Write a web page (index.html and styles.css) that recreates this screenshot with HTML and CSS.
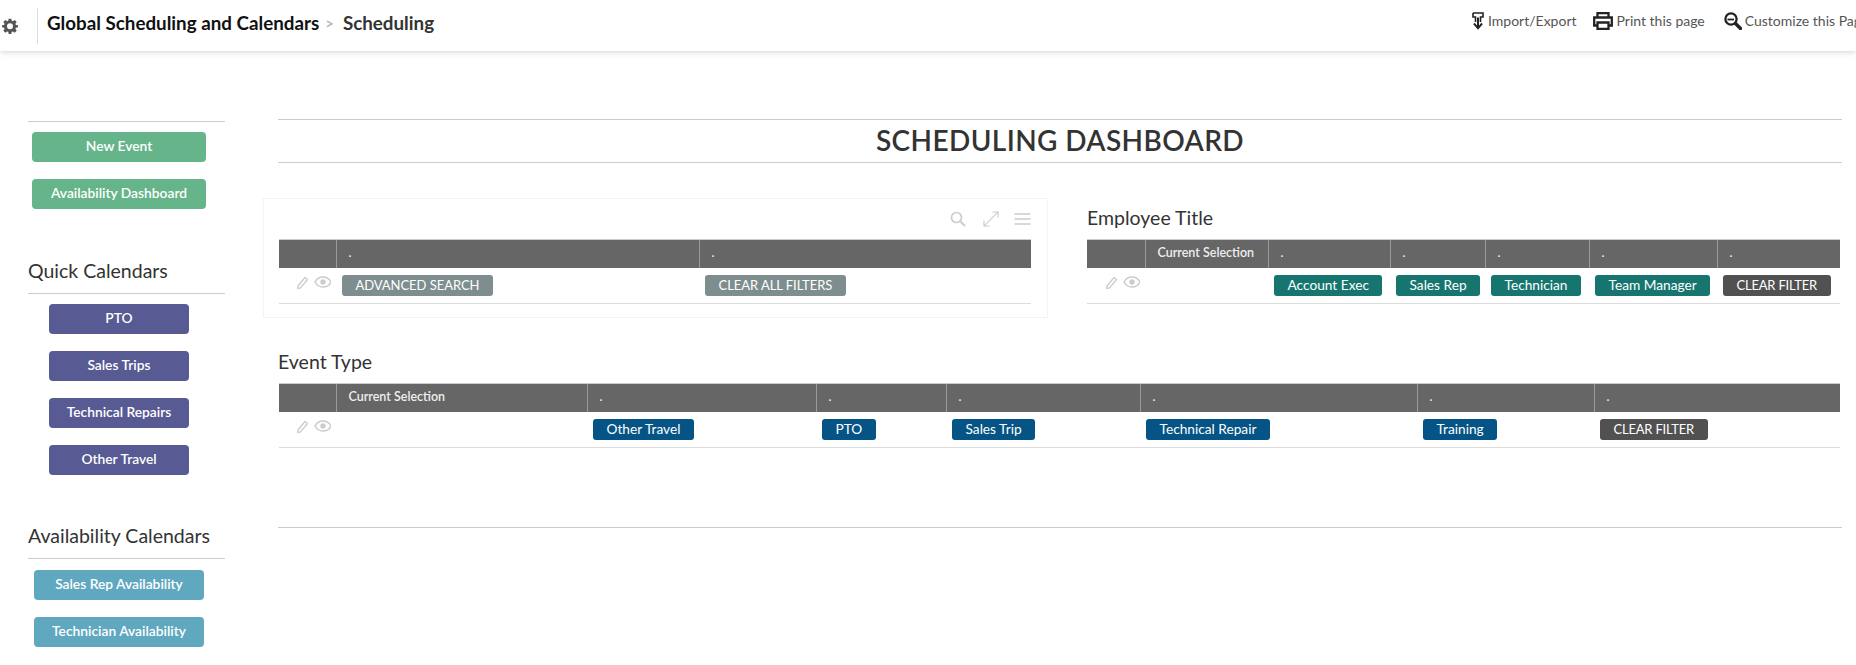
FILE: index.html
```html
<!DOCTYPE html>
<html lang="en">
<head>
<meta charset="utf-8">
<title>Scheduling</title>
<link rel="stylesheet" href="styles.css">
</head>
<body>
<header class="topbar">
  <div class="crumbs">
    <svg class="gear" viewBox="0 0 24 24"><path fill-rule="evenodd" d="M10 1h4l.6 3.200 1.700.7L19 3l3 3-1.900 2.700.7 1.700L24 11v3l-3.200.6-.7 1.700L22 19l-3 3-2.700-1.900-1.700.7L14 24h-4l-.6-3.200-1.700-.7L5 22l-3-3 1.900-2.700-.7-1.700L0 14v-3l3.200-.6.7-1.700L2 6l3-3 2.700 1.900 1.700-.7zM12 8a4.500 4.500 0 1 0 0 9 4.500 4.500 0 0 0 0-9z"/></svg>
    <span class="divider"></span>
    <span class="crumb-main">Global Scheduling and Calendars</span>
    <span class="crumb-sep">&gt;</span>
    <span class="crumb-sub">Scheduling</span>
  </div>
  <nav class="actions">
    <a class="action action-import">
      <svg class="ico-import" viewBox="0 0 12 18"><path d="M1 1h10v4H8.500v5M1 1v4h2.500v5" fill="none" stroke="#222" stroke-width="1.600"/><path d="M6 5.500V16M2 11.500 6 16.300l4-4.800" fill="none" stroke="#222" stroke-width="2"/></svg>
      Import/Export</a>
    <a class="action action-print">
      <svg class="ico-print" viewBox="0 0 20 18"><path d="M4.500 5V1.200h11V5M4.500 13.500H1.200V5.500h17.600v8h-3.300M4.500 10.500h11v6.300h-11z" fill="none" stroke="#222" stroke-width="2.300"/></svg>
      Print this page</a>
    <a class="action action-custom">
      <svg class="ico-custom" viewBox="0 0 18 18"><circle cx="7" cy="7" r="5.600" fill="none" stroke="#222" stroke-width="2.300"/><path d="M11.500 11.500l5 5" stroke="#222" stroke-width="3.400" stroke-linecap="round"/><path d="M3.500 7.500h6.500" stroke="#222" stroke-width="1.800"/></svg>
      Customize this Page</a>
  </nav>
</header>

<div class="page">
  <aside class="sidebar">
    <section class="side-first">
      <div class="side-buttons">
        <a class="side-btn green w174">New Event</a>
        <a class="side-btn green w174">Availability Dashboard</a>
      </div>
    </section>
    <section class="side-quick">
      <h3 class="side-title">Quick Calendars</h3>
      <div class="side-buttons">
        <a class="side-btn purple w140">PTO</a>
        <a class="side-btn purple w140">Sales Trips</a>
        <a class="side-btn purple w140">Technical Repairs</a>
        <a class="side-btn purple w140">Other Travel</a>
      </div>
    </section>
    <section class="side-avail">
      <h3 class="side-title">Availability Calendars</h3>
      <div class="side-buttons">
        <a class="side-btn blue w170">Sales Rep Availability</a>
        <a class="side-btn blue w170">Technician Availability</a>
      </div>
    </section>
  </aside>

  <main class="content">
    <h1 class="dash-title">SCHEDULING DASHBOARD</h1>

    <div class="top-row">
      <section class="card">
        <div class="tools">
          <svg class="tool t-search" viewBox="0 0 16 16"><circle cx="6.500" cy="6.500" r="5" fill="none" stroke="#ccc" stroke-width="1.700"/><path d="M10.500 10.500 15 15" stroke="#ccc" stroke-width="2"/></svg>
          <svg class="tool t-expand" viewBox="0 0 17 17"><path d="M1 16 16 1M10 1h6v6M1 10v6h6" fill="none" stroke="#ccc" stroke-width="1.200"/></svg>
          <svg class="tool t-menu" viewBox="0 0 16 12"><path d="M0 1h16M0 6h16M0 11h16" stroke="#ccc" stroke-width="1.300"/></svg>
        </div>
        <table class="grid">
          <colgroup><col class="c57"><col class="c363"><col></colgroup>
          <thead><tr><th></th><th>.</th><th>.</th></tr></thead>
          <tbody><tr>
            <td class="row-icons"><svg class="row-svg" viewBox="0 0 34 14"><use href="#rowicons"/></svg></td>
            <td><a class="pill grey">ADVANCED SEARCH</a></td>
            <td><a class="pill grey">CLEAR ALL FILTERS</a></td>
          </tr></tbody>
        </table>
      </section>

      <section class="panel">
        <h3 class="panel-title">Employee Title</h3>
        <table class="grid">
          <colgroup><col class="c58"><col class="c123"><col class="c122"><col class="c95"><col class="c104"><col class="c128"><col></colgroup>
          <thead><tr><th></th><th>Current Selection</th><th>.</th><th>.</th><th>.</th><th>.</th><th>.</th></tr></thead>
          <tbody><tr>
            <td class="row-icons"><svg class="row-svg" viewBox="0 0 34 14"><use href="#rowicons"/></svg></td>
            <td></td>
            <td><a class="pill teal">Account Exec</a></td>
            <td><a class="pill teal">Sales Rep</a></td>
            <td><a class="pill teal">Technician</a></td>
            <td><a class="pill teal">Team Manager</a></td>
            <td><a class="pill dark">CLEAR FILTER</a></td>
          </tr></tbody>
        </table>
      </section>
    </div>

    <section class="event">
      <h3 class="panel-title">Event Type</h3>
      <table class="grid">
        <colgroup><col class="c57"><col class="c251"><col class="c229"><col class="c130"><col class="c194"><col class="c277"><col class="c177"><col></colgroup>
        <thead><tr><th></th><th>Current Selection</th><th>.</th><th>.</th><th>.</th><th>.</th><th>.</th><th>.</th></tr></thead>
        <tbody><tr>
          <td class="row-icons"><svg class="row-svg" viewBox="0 0 34 14"><use href="#rowicons"/></svg></td>
          <td></td>
          <td><a class="pill navy">Other Travel</a></td>
          <td><a class="pill navy">PTO</a></td>
          <td><a class="pill navy">Sales Trip</a></td>
          <td><a class="pill navy">Technical Repair</a></td>
          <td><a class="pill navy">Training</a></td>
          <td><a class="pill dark">CLEAR FILTER</a></td>
        </tr></tbody>
      </table>
    </section>
    <div class="end-rule"></div>
  </main>
</div>

<svg class="defs" width="0" height="0">
  <symbol id="rowicons" viewBox="0 0 34 14">
    <path d="M1 11 8 2.500l2.500 2L3.500 13l-3 .5z" fill="none" stroke="#ccc" stroke-width="1.300"/>
    <path d="M18 7c1.800-3.300 4.300-5 8-5s6.200 1.700 8 5c-1.800 3.300-4.300 5-8 5s-6.200-1.700-8-5z" fill="none" stroke="#ccc" stroke-width="1.500"/>
    <circle cx="26" cy="7" r="2.700" fill="#ccc"/>
  </symbol>
</svg>
</body>
</html>
```
FILE: styles.css
```css
* { box-sizing: border-box; }
html, body { margin: 0; padding: 0; }
body {
  width: 1856px;
  height: 665px;
  overflow: hidden;
  background: #fff;
  font-family: Lato, "Open Sans", sans-serif;
  color: #333;
}
.defs { position: absolute; }

.topbar {
  display: flex;
  align-items: center;
  height: 51px;
  background: #fff;
  box-shadow: 0 1px 6px rgba(0,0,0,.18);
  overflow: hidden;
}
.crumbs {
  flex: 0 0 1472px;
  display: flex;
  align-items: center;
  padding-left: 2px;
}
.gear { width: 16px; height: 16px; fill: #555; }
.divider { width: 1px; height: 36px; background: #ddd; margin: 0 9px 0 19px; }
.crumb-main { font-size: 18.8px; font-weight: 700; color: #111; margin-top: -6px; }
.crumb-sep { font-size: 15px; font-weight: 700; color: #bbb; margin: -6px 9px 0 6px; }
.crumb-sub { font-size: 18.8px; font-weight: 700; color: #333; margin-top: -6px; }

.actions { flex: none; display: flex; align-items: center; margin-top: -10px; }
.action { display: flex; align-items: center; font-size: 14px; color: #555; white-space: nowrap; }
.action-print { margin-left: 16px; }
.action-custom { margin-left: 19px; }
.ico-import { width: 12px; height: 18px; margin-right: 4px; }
.ico-print { width: 20px; height: 18px; margin-right: 4px; }
.ico-custom { width: 18px; height: 18px; margin-right: 3px; }

.page { display: flex; }
.sidebar { flex: 0 0 197px; margin-left: 28px; padding-top: 70px; }
.side-first { border-top: 1px solid #ccc; padding-top: 10px; }
.side-quick { margin-top: 43px; }
.side-avail { margin-top: 42px; }
.side-title {
  margin: 0;
  height: 42px;
  padding-top: 6px;
  line-height: 25px;
  font-size: 19.5px;
  font-weight: 400;
  color: #333;
  border-bottom: 1px solid #ccc;
}
.side-quick .side-buttons { margin-top: 10px; }
.side-avail .side-buttons { margin-top: 11px; }
.side-buttons {
  display: flex;
  flex-direction: column;
  align-items: center;
  gap: 17px;
  width: 182px;
}
.side-btn {
  display: block;
  height: 30px;
  line-height: 28px;
  border-radius: 4px;
  font-size: 13.8px;
  font-weight: 600;
  color: #fff;
  text-align: center;
}
.w174 { width: 174px; }
.w140 { width: 140px; }
.w170 { width: 170px; }
.green { background: #65b48a; }
.purple { background: #575a93; }
.blue { background: #60a8c0; }

.content { width: 1564px; margin-left: 53px; padding-top: 68px; }
.dash-title {
  margin: 0;
  height: 44px;
  line-height: 40px;
  border-top: 1px solid #ccc;
  border-bottom: 1px solid #ccc;
  text-align: center;
  font-size: 28px;
  font-weight: 600;
  letter-spacing: .4px;
  color: #333;
}
.top-row { display: flex; margin-top: 35px; }
.card {
  flex: 0 0 785px;
  margin-left: -15px;
  height: 120px;
  padding: 0 16px 0 15px;
  border: 1px solid #f4f4f4;
}
.tools { display: flex; align-items: center; justify-content: flex-end; height: 40px; }
.tool { display: block; }
.t-search { width: 16px; height: 16px; margin-right: 17px; }
.t-expand { width: 16px; height: 16px; margin-right: 15px; }
.t-menu { width: 17px; height: 12px; }
.panel { flex: 0 0 753px; margin-left: 39px; }
.panel-title {
  margin: 0;
  height: 41px;
  padding-top: 8px;
  line-height: 24px;
  font-size: 19.5px;
  font-weight: 400;
  color: #333;
}
.event { margin-top: 24px; margin-left: 1px; width: 1561px; }
.event .panel-title { margin-left: -1px; }
.end-rule { border-top: 1px solid #ccc; margin-top: 79px; }

.grid { width: 100%; table-layout: fixed; border-collapse: collapse; }
.grid th {
  height: 28px;
  padding: 0 0 3px 12px;
  border-top: 1px solid #ccc;
  border-left: 1px solid #999;
  background: #666;
  color: #eee;
  font-size: 12.5px;
  font-weight: 600;
  text-align: left;
  vertical-align: middle;
}
.grid th:first-child { border-left: 0; }
.grid td {
  height: 36px;
  padding: 0 0 0 6px;
  border-bottom: 1px solid #ddd;
  vertical-align: top;
}
.row-icons { text-align: right; }
.row-svg { display: block; width: 34px; height: 14px; margin: 7px 5px 0 auto; }

.pill {
  display: inline-block;
  height: 21px;
  margin-top: 7px;
  padding: 0 13.5px;
  border-radius: 3px;
  font-size: 13.7px;
  line-height: 20px;
  color: #fff;
  white-space: nowrap;
}
.grey { background: #7e8e8f; font-size: 13px; letter-spacing: -.05px; }
.teal { background: #177570; }
.navy { background: #055485; }
.dark { background: #515151; font-size: 13px; letter-spacing: -.2px; }

.c57 { width: 57px; }
.c58 { width: 58px; }
.c95 { width: 95px; }
.c104 { width: 104px; }
.c122 { width: 122px; }
.c123 { width: 123px; }
.c128 { width: 128px; }
.c130 { width: 130px; }
.c177 { width: 177px; }
.c194 { width: 194px; }
.c229 { width: 229px; }
.c251 { width: 251px; }
.c277 { width: 277px; }
.c363 { width: 363px; }
```
